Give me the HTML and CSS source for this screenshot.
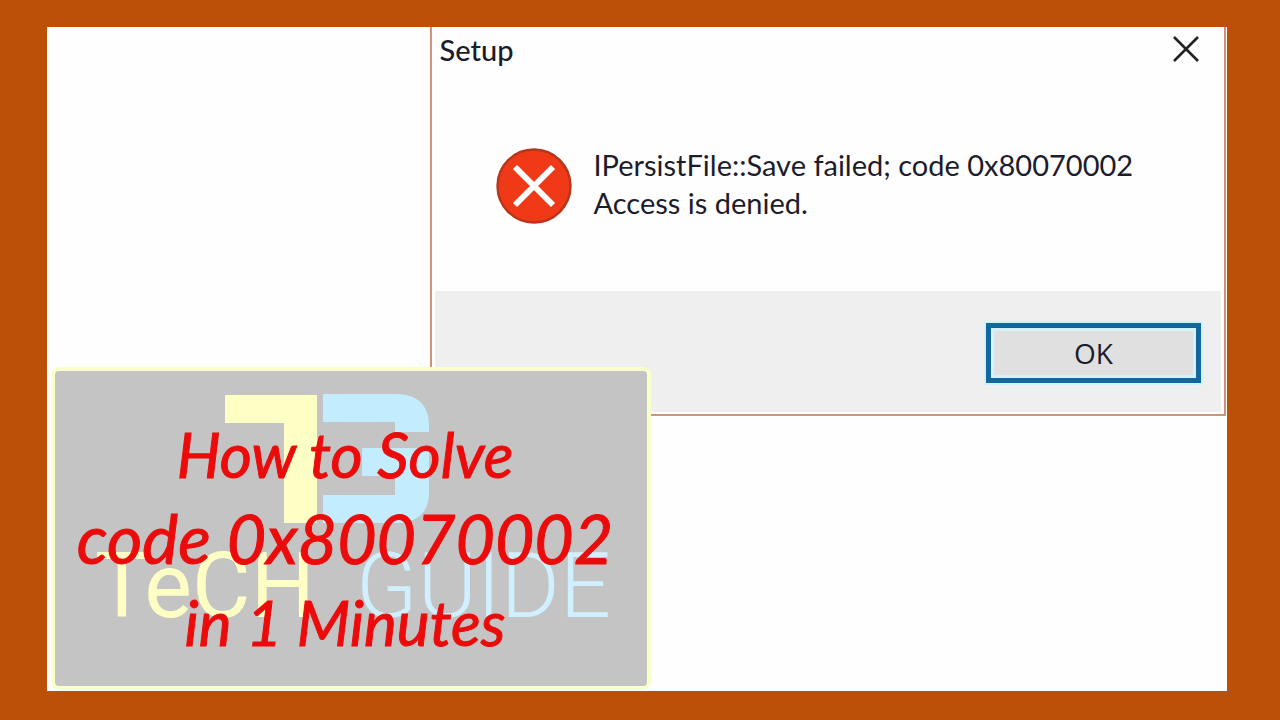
FILE: index.html
```html
<!DOCTYPE html>
<html lang="en">
<head>
<meta charset="utf-8">
<title>How to Solve code 0x80070002</title>
<link rel="stylesheet" href="styles.css">
</head>
<body>
<main class="canvas">
  <section class="dialog" role="dialog" aria-labelledby="dialog-title">
    <header class="titlebar">
      <h2 class="title" id="dialog-title">Setup</h2>
      <button class="close" type="button" aria-label="Close">
        <svg width="28" height="28" viewBox="0 0 28 28"><path d="M2 2L26 26M26 2L2 26" fill="none" stroke="#222" stroke-width="2.6"/></svg>
      </button>
    </header>
    <div class="message">
      <svg class="error-icon" width="76" height="76" viewBox="0 0 76 76">
        <circle cx="38" cy="38" r="36.5" fill="#f03a17" stroke="#b8341c" stroke-width="2.4"/>
        <path d="M19 19L57 57M57 19L19 57" fill="none" stroke="#fff" stroke-width="6"/>
      </svg>
      <p class="text">IPersistFile::Save failed; code 0x80070002<br>Access is denied.</p>
    </div>
    <footer class="actions">
      <button class="ok" type="button">OK</button>
    </footer>
  </section>

  <section class="card">
    <div class="brand">
      <svg class="emblem" width="204" height="130" viewBox="0 0 204 130" aria-hidden="true">
        <path d="M0 1H92V129H59V29H0Z" fill="#fdffc4"/>
        <path d="M98 0H174Q204 2 204 32V38H170V28H98ZM137 54H204V100Q203 127 174 129H98V101H170V82H137Z" fill="#c3edff"/>
      </svg>
      <div class="wordmark"><span class="word-warm">TeCH</span><span class="word-cool">GUIDE</span></div>
    </div>
    <h1 class="headline">
      <span class="line">How to Solve</span>
      <span class="line line-code">code 0x80070002</span>
      <span class="line">in 1 Minutes</span>
    </h1>
  </section>
</main>
</body>
</html>
```
FILE: styles.css
```css
* {
  box-sizing: border-box;
}

body {
  margin: 0;
  min-height: 100vh;
  display: flex;
  padding: 27px 53px 29px 47px;
  background: #bc5008;
  font-family: Lato, "Open Sans", sans-serif;
}

.canvas {
  position: relative;
  flex: 1;
  background: #fefefe;
}

.dialog {
  width: 67.5%;
  margin-left: auto;
  margin-right: 1px;
  border: 2px solid #cf9478;
  border-top: 0;
  color: #1c1c2c;
}

.titlebar {
  display: flex;
  justify-content: space-between;
  align-items: center;
  height: 44px;
  padding: 0 24px 0 8px;
}

.title {
  margin: 0;
  font-size: 29px;
  font-weight: 500;
}

.close {
  display: flex;
  padding: 0;
  border: 0;
  background: none;
}

.message {
  display: flex;
  align-items: center;
  gap: 22px;
  padding: 75px 16px 65px 64px;
}

.error-icon {
  flex: none;
}

.text {
  margin: 0 0 4px;
  font-size: 29px;
  line-height: 38px;
  white-space: nowrap;
}

.actions {
  display: flex;
  justify-content: flex-end;
  margin: 0 3px 2px;
  padding: 32px 20px 29px;
  background: #efefef;
}

.ok {
  width: 215px;
  height: 60px;
  border: 5px solid #12679c;
  outline: 2px solid #d3f2fc;
  box-shadow: inset 0 0 0 3px #d3f2fc;
  background: #e0e0e0;
  color: #1c1c2c;
  font: 28px "Open Sans", sans-serif;
}

.card {
  position: absolute;
  left: 4px;
  bottom: 1px;
  display: grid;
  width: 600px;
  border: 4px solid #faffcc;
  border-radius: 8px;
  background: #c4c4c4;
}

.brand,
.headline {
  grid-area: 1 / 1;
}

.brand {
  padding: 23px 36px 0 40px;
}

.emblem {
  display: block;
  margin-left: 130px;
}

.wordmark {
  display: flex;
  justify-content: space-between;
  margin-top: 17px;
  font-family: Roboto, sans-serif;
  font-size: 90px;
  line-height: 92px;
}

.word-warm {
  color: #fdffc4;
}

.word-cool {
  color: #d0f0ff;
  font-weight: 300;
}

.headline {
  position: relative;
  margin: 0;
  padding: 41px 12px 22px 0;
  color: #ec0b0b;
  font-size: 62px;
  font-style: italic;
  font-weight: 400;
  line-height: 84px;
  text-align: center;
  -webkit-text-stroke: 1px #ec0b0b;
  stroke-linejoin: round;
}

.line {
  display: block;
}

.line-code {
  font-size: 68px;
}
```
